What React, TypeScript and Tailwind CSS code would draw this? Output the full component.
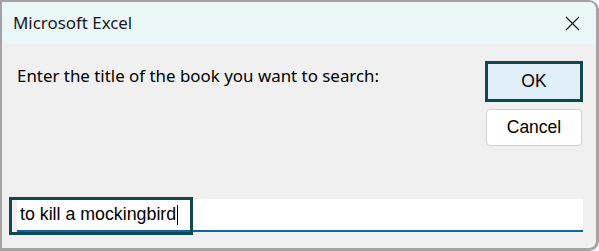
import React from "react";

export default function App() {
  const seg = { fontFamily: '"Noto Sans", "Open Sans", sans-serif' };
  const ms = { fontFamily: '"Liberation Sans", Arial, sans-serif' };
  return (
    <div className="w-[599px] h-[251px] bg-white" style={seg}>
      <div className="w-[599px] h-[251px] flex flex-col rounded-tr-[10px] rounded-br-[10px] border-l-2 border-t-2 border-r-[3px] border-b-[3px] border-[#a3a3a3] bg-[#f0f0f0] overflow-hidden">
        <div className="h-[42px] shrink-0 bg-[#eaf6f8] flex items-center justify-between pl-[11px] pr-[16px]">
          <span className="text-[16.9px] text-[#1a1a1a] leading-none">Microsoft Excel</span>
          <svg width="15" height="15" viewBox="0 0 15 15" className="mt-[1px]">
            <path d="M1 1 L14 14 M14 1 L1 14" stroke="#1a1a1a" strokeWidth="1.2" fill="none" />
          </svg>
        </div>
        <div className="flex-1 flex flex-col pl-[15px] pr-[13px] pt-[17px] pb-[16px]">
          <div className="flex justify-between">
            <div className="pt-[3px] text-[16.9px] text-black leading-[24px]">
              Enter the title of the book you want to search:
            </div>
            <div className="flex flex-col gap-[7px] w-[98px]" style={ms}>
              <div className="h-[41px] border-[3px] border-[#0e4a4c] bg-[#e0eef9] flex items-center justify-center text-[17.5px] text-black">
                OK
              </div>
              <div className="h-[37px] border border-[#d0d0d0] rounded-[4px] bg-white flex items-center justify-center text-[17.5px] text-black mx-[1px]">
                Cancel
              </div>
            </div>
          </div>
          <div className="mt-auto relative h-[33px] bg-white border-b-2 border-[#0067c0] flex items-center pl-[3px]" style={ms}>
            <span className="text-[17.8px] text-black leading-none">to kill a mockingbird</span>
            <span className="w-[1px] h-[20px] bg-black ml-[1px]" />
            <div className="absolute left-[-8px] top-[-2px] w-[184px] h-[38px] border-[3px] border-[#0e4a4c]" />
          </div>
        </div>
      </div>
    </div>
  );
}
